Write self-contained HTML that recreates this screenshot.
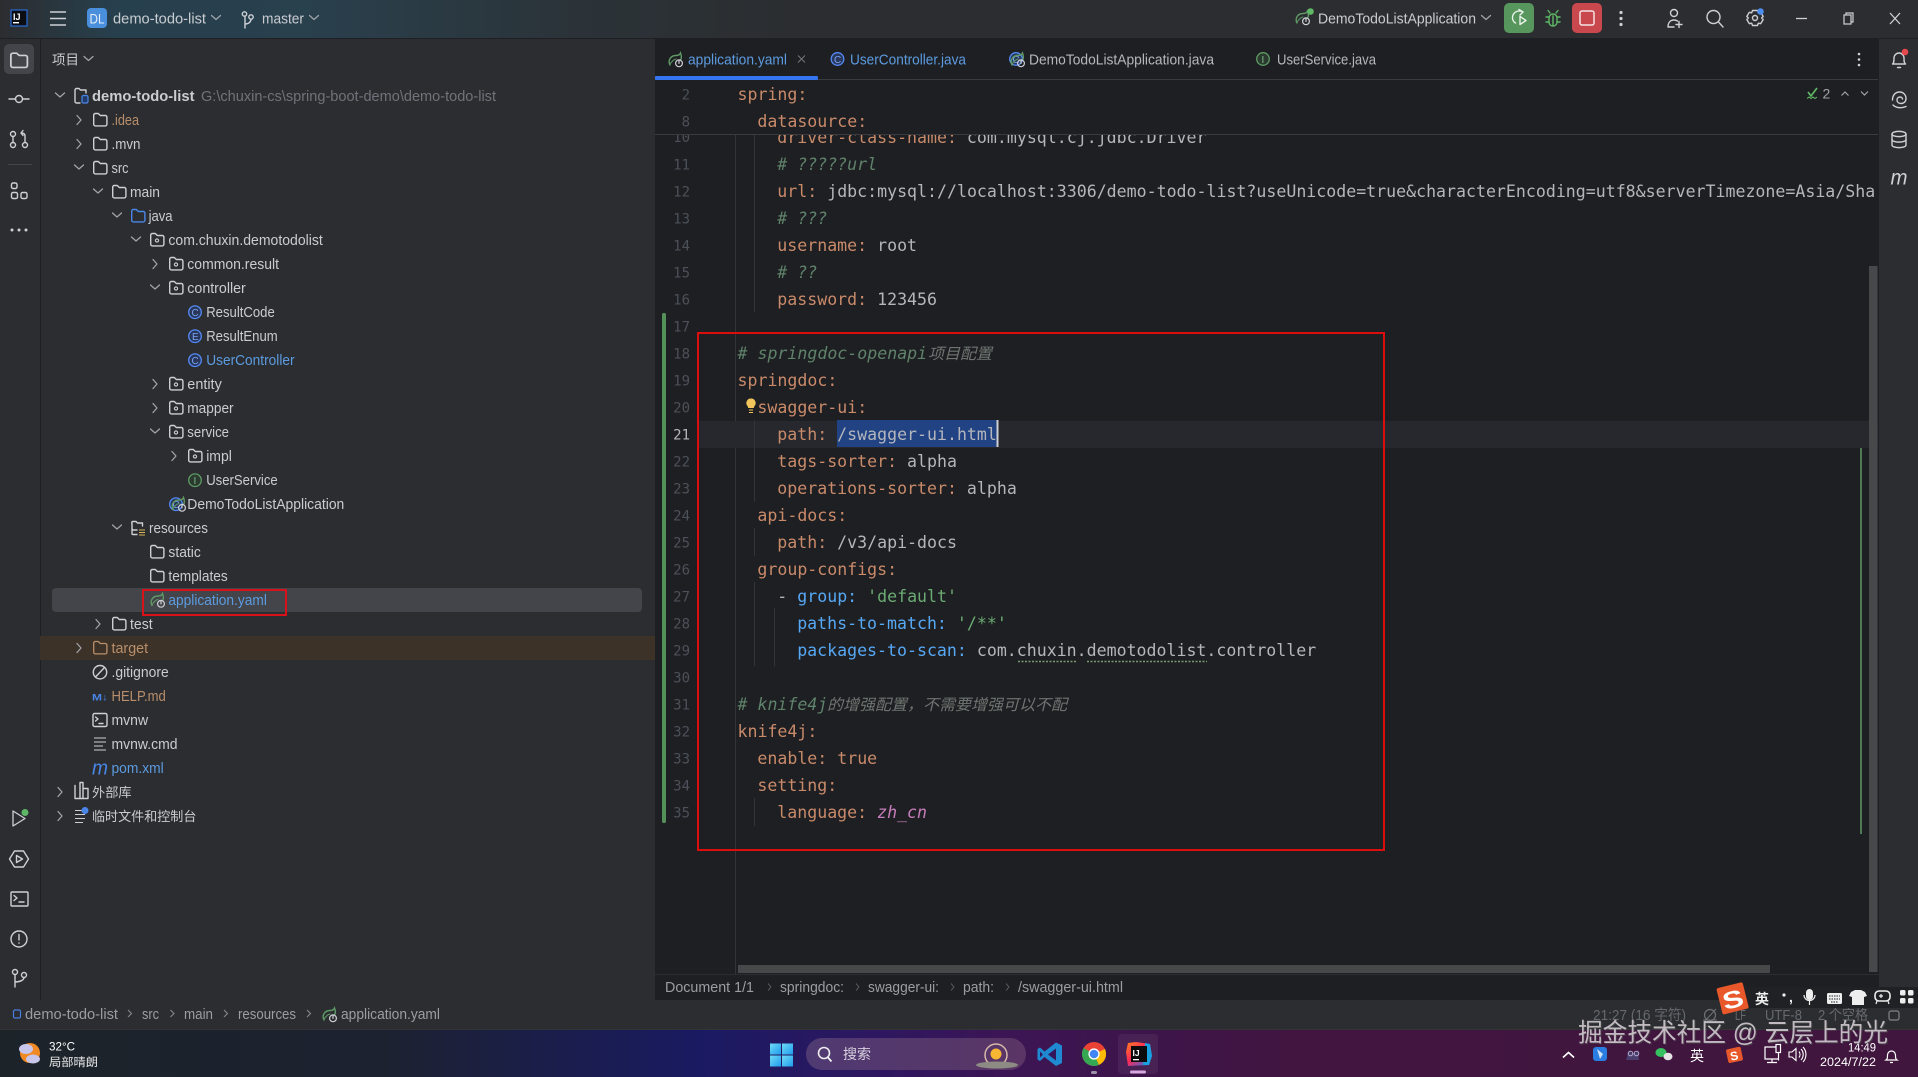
<!DOCTYPE html>
<html lang="zh"><head><meta charset="utf-8"><title>demo-todo-list</title>
<style>
html,body{margin:0;padding:0;background:#2b2d30;overflow:hidden;width:1918px;height:1077px}
svg{display:block;filter:blur(.35px)}
text{font-family:"Liberation Sans","Noto Sans CJK SC",sans-serif;font-size:14.5px;fill:#c9ccd1;white-space:pre}
.m text,text.m{font-family:"DejaVu Sans Mono","Liberation Mono","Noto Sans CJK SC",monospace;font-size:16.58px;fill:#b4b6bc}
.n text{font-family:"DejaVu Sans Mono","Liberation Mono",monospace;font-size:14px;fill:#4b5059;text-anchor:end}
.k{fill:#c98a6a!important}.b{fill:#56a8f5!important}.g{fill:#6aab73!important}.c{fill:#5f826b!important;font-style:italic}
.blu{fill:#5c9be0!important}.tan{fill:#b98f6b!important}.dim{fill:#6f737a!important}.st{fill:#9a9da3!important}
.ic{fill:none;stroke:#ced0d6;stroke-width:1.4;stroke-linecap:round;stroke-linejoin:round}
.chev{fill:none;stroke:#a0a3a9;stroke-width:1.3;stroke-linecap:round;stroke-linejoin:round}
</style></head><body>
<svg width="1918" height="1077" viewBox="0 0 1918 1077" xmlns="http://www.w3.org/2000/svg">
<defs>
<linearGradient id="top" x1="0" x2="1" y1="0" y2="0"><stop offset="0" stop-color="#2b2d30"/><stop offset=".06" stop-color="#27404d"/><stop offset=".16" stop-color="#29404d"/><stop offset=".3" stop-color="#2b3338"/><stop offset=".42" stop-color="#2b2d30"/></linearGradient>
<linearGradient id="tb" x1="0" x2="1" y1="0" y2="0"><stop offset="0" stop-color="#1c2329"/><stop offset=".2" stop-color="#1c2230"/><stop offset=".365" stop-color="#1a1a62"/><stop offset=".46" stop-color="#2e1760"/><stop offset=".52" stop-color="#3b1555"/><stop offset=".68" stop-color="#41153f"/><stop offset="1" stop-color="#40163e"/></linearGradient>
<linearGradient id="win" x1="0" x2="1" y1="0" y2="1"><stop offset="0" stop-color="#6fdcf5"/><stop offset="1" stop-color="#1f9bee"/></linearGradient>
<linearGradient id="pill" x1="0" x2="1" y1="0" y2="0"><stop offset="0" stop-color="#4f3a72"/><stop offset="1" stop-color="#5a3565"/></linearGradient>
<linearGradient id="ij" x1="0" x2="1" y1="0" y2="1"><stop offset="0" stop-color="#fc801d"/><stop offset=".45" stop-color="#fe2857"/><stop offset="1" stop-color="#087cfa"/></linearGradient>
<g id="folder" class="ic"><path d="M.7 2.6A1.6 1.6 0 0 1 2.3 1h3l2 2h5a1.6 1.6 0 0 1 1.6 1.6v7.2a1.6 1.6 0 0 1-1.6 1.6h-10A1.6 1.6 0 0 1 .7 11.8z"/></g>
<g id="pkg"><use href="#folder"/><circle cx="7" cy="8" r="1.6" fill="none" stroke="#ced0d6" stroke-width="1.1"/></g>
<g id="leaf" fill="none" stroke-linecap="round"><path d="M2 13C-.5 8 3 3.5 8 3.5 10.5 3.5 12 2.5 12.5 1c1.2 3 1 5 .3 6.5" stroke="#5f9a66" stroke-width="1.4"/><path d="M2 12.5C4 8.5 6 7.5 8 7" stroke="#5f9a66" stroke-width="1.1"/><circle cx="11" cy="11.3" r="3.4" stroke="#ced0d6" stroke-width="1.2"/><path d="M11 8.6v2.8" stroke="#ced0d6" stroke-width="1.2"/></g>
<g id="cls"><circle cx="7" cy="7" r="6.3" fill="#28375a" stroke="#548af7" stroke-width="1.3"/></g>
<g id="ifc"><circle cx="7" cy="7" r="6.3" fill="#2b3a2e" stroke="#5f9a66" stroke-width="1.3"/></g>
<g id="chr" class="chev"><path d="M0 -4.5L4 0L0 4.5"/></g>
<g id="chd" class="chev"><path d="M-4.5 -2L0 2L4.5 -2"/></g>
</defs>

<!-- base areas -->
<rect width="1918" height="1077" fill="#2b2d30"/>
<rect width="1918" height="38" fill="url(#top)"/>
<rect y="38" width="1918" height="1" fill="#1e1f22"/>
<rect x="40" y="39" width="1" height="961" fill="#1e1f22"/>
<rect x="655" y="39" width="1224" height="961" fill="#1e1f22"/>

<!-- title bar -->
<rect x="11" y="10" width="16" height="16" fill="#0b0d12" stroke="#2a6bd6" stroke-width="1.2"/>
<text x="13" y="20" style="font-size:9px;font-weight:bold;fill:#fff">IJ</text>
<rect x="13" y="22" width="6" height="1.4" fill="#fff"/>
<path d="M50 12h16M50 18.5h16M50 25h16" stroke="#ced0d6" stroke-width="1.6" fill="none"/>
<rect x="87" y="8" width="20" height="20" rx="4" fill="#4a8fdc"/>
<text x="89.5" y="23.5" style="font-size:13.5px;fill:#e6eef8" textLength="15" lengthAdjust="spacingAndGlyphs">DL</text>
<text x="113" y="23.5" textLength="93" lengthAdjust="spacingAndGlyphs">demo-todo-list</text>
<use href="#chd" x="216" y="17.5"/>
<g class="ic" stroke-width="1.2"><circle cx="244.5" cy="14" r="2.2"/><circle cx="251" cy="17" r="2.2"/><path d="M245 16.5V28M245 24c4 0 6-2.500 6-4.700"/></g>
<text x="262" y="23.5" textLength="42" lengthAdjust="spacingAndGlyphs">master</text>
<use href="#chd" x="314" y="17.5"/>

<use href="#leaf" x="1295" y="10"/>
<circle cx="1310.5" cy="11.5" r="3.3" fill="#5fb865"/>
<text x="1318" y="23.5" textLength="158" lengthAdjust="spacingAndGlyphs">DemoTodoListApplication</text>
<use href="#chd" x="1486" y="17.5"/>
<rect x="1504" y="3" width="30" height="30" rx="5" fill="#57965c"/>
<g fill="none" stroke="#e8f2e8" stroke-width="1.4" stroke-linejoin="round" stroke-linecap="round"><path d="M1523 12a7 7 0 0 0-10 3c-1.5 4 .5 7 2.5 8"/><path d="M1519 9.5l4 2.5-3 3"/><path d="M1520 16.5l6 4-6 4z"/></g>
<g fill="none" stroke="#5fb865" stroke-width="1.4" stroke-linecap="round"><rect x="1549" y="14" width="8" height="12" rx="4"/><path d="M1550 13l-2-2.500M1556 13l2-2.500M1546 17h3M1557 17h3M1546 22h3M1557 22h3M1553 16v9"/></g>
<rect x="1572" y="3" width="30" height="30" rx="5" fill="#c9484e"/>
<rect x="1580" y="11" width="14" height="14" rx="2" fill="none" stroke="#f4e4e4" stroke-width="1.5"/>
<g fill="#ced0d6"><circle cx="1621" cy="12.500" r="1.6"/><circle cx="1621" cy="18.500" r="1.6"/><circle cx="1621" cy="24.500" r="1.6"/></g>
<g class="ic"><circle cx="1674" cy="13" r="3.500"/><path d="M1668 27c0-4 2-7 6-7 1.500 0 2.500.4 3.500 1M1668 27h6M1679 21.500v6M1676 24.500h6"/></g>
<g class="ic" stroke-width="1.6"><circle cx="1713.500" cy="17" r="6.500"/><path d="M1718.500 22l4.500 5"/></g>
<g class="ic" stroke-width="1.300"><circle cx="1755" cy="18" r="2.500"/><path d="M1752.500 10.500h5l.8 2.300 2.400-.5 2.500 4.200-1.600 1.500 1.600 1.500-2.500 4.200-2.400-.5-.8 2.300h-5l-.8-2.300-2.400.5-2.500-4.200 1.600-1.500-1.600-1.500 2.500-4.200 2.400.5z"/></g>
<circle cx="1760.500" cy="11.500" r="3.300" fill="#4c8df0"/>
<path d="M1796 18.500h11" stroke="#ced0d6" stroke-width="1.3"/>
<g fill="none" stroke="#ced0d6" stroke-width="1.2"><rect x="1844" y="15" width="7" height="9"/><path d="M1846 15v-2h7v9h-2"/></g>
<path d="M1890 13l10 11M1900 13l-10 11" stroke="#ced0d6" stroke-width="1.3"/>

<!-- left toolbar -->
<rect x="4" y="44" width="30" height="30" rx="5" fill="#43454a"/>
<g class="ic" transform="translate(10,52) scale(1.25,1.15)" stroke-width="1.2"><path d="M.7 2.6A1.600 1.600 0 0 1 2.300 1h3l2 2h5a1.600 1.600 0 0 1 1.600 1.600v7.200a1.600 1.600 0 0 1-1.600 1.600h-10A1.600 1.600 0 0 1 .7 11.800z"/></g>
<g class="ic"><circle cx="19" cy="99" r="3.500"/><path d="M9 99h6.500M22.500 99H29"/></g>
<g class="ic" stroke-width="1.200"><circle cx="13" cy="134" r="2.500"/><circle cx="13" cy="145" r="2.500"/><circle cx="25" cy="145" r="2.500"/><path d="M13 136.500v6M25 142.500V136c0-2-1-3-4-3M21 133l2-2.500M21 133l2 2.500"/></g>
<rect x="8" y="164" width="24" height="1" fill="#43454a"/>
<g class="ic" stroke-width="1.200"><rect x="11.500" y="183" width="5.500" height="5.500" rx="1.500"/><rect x="11.500" y="192.500" width="6" height="6" rx="1.500"/><rect x="21" y="192.500" width="6" height="6" rx="1.500"/></g>
<g fill="#ced0d6"><circle cx="12" cy="230" r="1.500"/><circle cx="19" cy="230" r="1.500"/><circle cx="26" cy="230" r="1.500"/></g>
<path d="M13 811v15l12-7.500z" fill="none" stroke="#ced0d6" stroke-width="1.300" stroke-linejoin="round"/><circle cx="25" cy="812.500" r="3.500" fill="#5fb865"/>
<g class="ic" stroke-width="1.200"><path d="M14.500 851h9l5 8-5 8h-9l-5-8z"/><path d="M16.500 855.500v7l6-3.500z"/></g>
<g class="ic" stroke-width="1.200"><rect x="11" y="892" width="17" height="14" rx="1"/><path d="M14 895.500l3 2.500-3 2.500M19 902h5"/></g>
<g class="ic" stroke-width="1.300"><circle cx="19" cy="939" r="8"/><path d="M19 934.500v5.500M19 943v.2"/></g>
<g class="ic" stroke-width="1.200"><circle cx="15" cy="972" r="2.500"/><circle cx="24" cy="975" r="2.500"/><path d="M15 974.500V987M15 982c5 0 9-2 9-4.500"/></g>

<!-- project panel -->
<text x="52" y="64.500" style="font-size:13.500px">项目</text>
<use href="#chd" x="88.500" y="58.500"/>
<rect x="40" y="636" width="615" height="24" fill="#3d3227"/>
<rect x="52" y="588" width="590" height="24" rx="4" fill="#43454a"/>

<g>
<use href="#chd" x="60" y="95"/><use href="#chr" x="77" y="120"/><use href="#chr" x="77" y="144"/><use href="#chd" x="79" y="167"/><use href="#chd" x="98" y="191"/><use href="#chd" x="117" y="215"/><use href="#chd" x="136" y="239"/><use href="#chr" x="153" y="264"/><use href="#chd" x="155" y="287"/><use href="#chr" x="153" y="384"/><use href="#chr" x="153" y="408"/><use href="#chd" x="155" y="431"/><use href="#chr" x="172" y="456"/><use href="#chd" x="117" y="527"/><use href="#chr" x="96" y="624"/><use href="#chr" x="77" y="648"/><use href="#chr" x="58" y="792"/><use href="#chr" x="58" y="816"/>
</g>

<g transform="translate(0,-.5)">
<g class="ic" stroke-width="1.200"><path d="M75 90.500a1.500 1.500 0 0 1 1.500-1.500h2.500l1.500 1.500h5.500v3M80 103.500h-3.500a1.500 1.500 0 0 1-1.500-1.500V90.500"/></g>
<rect x="82" y="96" width="6" height="7.500" rx="1.500" fill="#223a6a" stroke="#4a86e8" stroke-width="1.200"/>
<use href="#folder" x="93" y="113"/><use href="#folder" x="93" y="137"/><use href="#folder" x="93" y="161"/><use href="#folder" x="112" y="185"/>
<g transform="translate(131,209)"><path fill="none" stroke="#4a86e8" stroke-width="1.400" d="M.7 2.600A1.600 1.600 0 0 1 2.300 1h3l2 2h5a1.600 1.600 0 0 1 1.600 1.600v7.200a1.600 1.600 0 0 1-1.600 1.600h-10A1.600 1.600 0 0 1 .7 11.800z"/></g>
<use href="#pkg" x="150" y="233"/><use href="#pkg" x="169" y="257"/><use href="#pkg" x="169" y="281"/>
<use href="#cls" x="188" y="305.700"/><text x="191.500" y="316.700" style="font-size:10px;fill:#7ba4f5">C</text>
<use href="#cls" x="188" y="329.700"/><text x="192" y="340.700" style="font-size:10px;fill:#7ba4f5">E</text>
<use href="#cls" x="188" y="353.700"/><text x="191.500" y="364.700" style="font-size:10px;fill:#7ba4f5">C</text>
<use href="#pkg" x="169" y="377"/><use href="#pkg" x="169" y="401"/><use href="#pkg" x="169" y="425"/><use href="#pkg" x="188" y="449"/>
<use href="#ifc" x="188" y="473.700"/><text x="193.500" y="484.700" style="font-size:10px;fill:#7fb886">I</text>
<use href="#cls" x="169" y="497.700"/><text x="172.500" y="508.700" style="font-size:10px;fill:#7ba4f5">C</text>
<use href="#leaf" x="171" y="497"/>
<g class="ic" stroke-width="1.200"><path d="M137 530.500h-3.500a1.500 1.500 0 0 1-1.500-1.500V524a1.500 1.500 0 0 1 .5-2h3.500l1.500 1.500h5v3M137 535h-4a1 1 0 0 1-1-1v-5"/></g>
<path d="M139 530.500h6M139 533h6M139 535.500h6" stroke="#d8b45a" stroke-width="1.100"/>
<use href="#folder" x="150" y="545"/><use href="#folder" x="150" y="569"/>
<use href="#leaf" x="150" y="593"/>
<use href="#folder" x="112" y="617"/>
<g transform="translate(93,641)"><path d="M.7 2.600A1.600 1.600 0 0 1 2.300 1h3l2 2h5a1.600 1.600 0 0 1 1.600 1.600v7.200a1.600 1.600 0 0 1-1.600 1.600h-10A1.600 1.600 0 0 1 .7 11.800z" fill="none" stroke="#b98f6b" stroke-width="1.300"/></g>
<g class="ic" stroke-width="1.200"><circle cx="100" cy="672.700" r="6.700"/><path d="M95.500 677.500l9-9.500"/></g>
<text x="92" y="701" style="font-size:9.500px;font-weight:bold;fill:#4a86e8" textLength="16" lengthAdjust="spacingAndGlyphs">M↓</text>
<g class="ic" stroke-width="1.100"><rect x="93" y="714" width="14" height="13" rx="1.500"/><path d="M95.500 717.500l2.500 2-2.500 2M99 724h4"/></g>
<path d="M94 738.500h12M94 742.500h12M94 746.500h9M94 750.500h12" stroke="#ced0d6" stroke-width="1.100" fill="none"/>
<text x="92" y="775" style="font-size:20px;font-style:italic;fill:#4a86e8" textLength="16" lengthAdjust="spacingAndGlyphs">m</text>
<g class="ic" stroke-width="1.100"><path d="M75 786v13h13v-10h-5v10M80 799v-16h3v6"/></g>
<g fill="none" stroke="#ced0d6" stroke-width="1.100"><path d="M75 811h7M75 815h10M75 819h10M75 823h8"/></g>
<circle cx="85" cy="811" r="3.500" fill="#4a86e8"/>

<text x="92" y="101.500" style="font-weight:bold" textLength="102.500" lengthAdjust="spacingAndGlyphs">demo-todo-list</text>
<text x="201" y="101.500" class="dim" textLength="295" lengthAdjust="spacingAndGlyphs">G:\chuxin-cs\spring-boot-demo\demo-todo-list</text>
<text x="111.500" y="125.500" class="tan" textLength="27.500" lengthAdjust="spacingAndGlyphs">.idea</text>
<text x="111.500" y="149.500" textLength="29" lengthAdjust="spacingAndGlyphs">.mvn</text>
<text x="111.500" y="173.500" textLength="17" lengthAdjust="spacingAndGlyphs">src</text>
<text x="130" y="197.500" textLength="30" lengthAdjust="spacingAndGlyphs">main</text>
<text x="148.600" y="221.500" textLength="24" lengthAdjust="spacingAndGlyphs">java</text>
<text x="168.400" y="245.500" textLength="154.400" lengthAdjust="spacingAndGlyphs">com.chuxin.demotodolist</text>
<text x="187.300" y="269.500" textLength="91.700" lengthAdjust="spacingAndGlyphs">common.result</text>
<text x="187.300" y="293.500" textLength="58.500" lengthAdjust="spacingAndGlyphs">controller</text>
<text x="206.200" y="317.500" textLength="68.600" lengthAdjust="spacingAndGlyphs">ResultCode</text>
<text x="206.200" y="341.500" textLength="71.500" lengthAdjust="spacingAndGlyphs">ResultEnum</text>
<text x="206.200" y="365.500" class="blu" textLength="88.400" lengthAdjust="spacingAndGlyphs">UserController</text>
<text x="187.300" y="389.500" textLength="34.500" lengthAdjust="spacingAndGlyphs">entity</text>
<text x="187.300" y="413.500" textLength="46.300" lengthAdjust="spacingAndGlyphs">mapper</text>
<text x="187.300" y="437.500" textLength="41.700" lengthAdjust="spacingAndGlyphs">service</text>
<text x="206.200" y="461.500" textLength="25.700" lengthAdjust="spacingAndGlyphs">impl</text>
<text x="206.200" y="485.500" textLength="71.500" lengthAdjust="spacingAndGlyphs">UserService</text>
<text x="187.300" y="509.500" textLength="157" lengthAdjust="spacingAndGlyphs">DemoTodoListApplication</text>
<text x="149" y="533.500" textLength="59" lengthAdjust="spacingAndGlyphs">resources</text>
<text x="168.400" y="557.500" textLength="32.400" lengthAdjust="spacingAndGlyphs">static</text>
<text x="168.400" y="581.500" textLength="59.300" lengthAdjust="spacingAndGlyphs">templates</text>
<text x="168.400" y="605.500" class="blu" textLength="98.500" lengthAdjust="spacingAndGlyphs">application.yaml</text>
<text x="130" y="629.500" textLength="22.700" lengthAdjust="spacingAndGlyphs">test</text>
<text x="111.500" y="653.500" class="tan" textLength="36.600" lengthAdjust="spacingAndGlyphs">target</text>
<text x="111.500" y="677.500" textLength="57.200" lengthAdjust="spacingAndGlyphs">.gitignore</text>
<text x="111.500" y="701.500" class="tan" textLength="54.300" lengthAdjust="spacingAndGlyphs">HELP.md</text>
<text x="111.500" y="725.500" textLength="36.600" lengthAdjust="spacingAndGlyphs">mvnw</text>
<text x="111.500" y="749.500" textLength="66" lengthAdjust="spacingAndGlyphs">mvnw.cmd</text>
<text x="111.500" y="773.500" class="blu" textLength="52.200" lengthAdjust="spacingAndGlyphs">pom.xml</text>
<text x="92" y="797.500" style="font-size:13px" textLength="39.600" lengthAdjust="spacingAndGlyphs">外部库</text>
<text x="92" y="821.500" style="font-size:13px" textLength="104.400" lengthAdjust="spacingAndGlyphs">临时文件和控制台</text>
</g>
<rect x="143" y="590" width="143" height="25" fill="none" stroke="#d9111b" stroke-width="2"/>

<!-- tabs -->
<use href="#leaf" x="668" y="52"/>
<text x="688" y="64.500" class="blu" textLength="99" lengthAdjust="spacingAndGlyphs">application.yaml</text>
<path d="M798 55.500l7 7M805 55.500l-7 7" stroke="#6f737a" stroke-width="1.100"/>
<use href="#cls" x="830.500" y="52"/><text x="834" y="63" style="font-size:10px;fill:#7ba4f5">C</text>
<text x="850" y="64.500" class="blu" textLength="116" lengthAdjust="spacingAndGlyphs">UserController.java</text>
<use href="#cls" x="1009" y="52"/><text x="1012.500" y="63" style="font-size:10px;fill:#7ba4f5">C</text>
<use href="#leaf" x="1010" y="52"/>
<text x="1029" y="64.500" textLength="185" lengthAdjust="spacingAndGlyphs" style="fill:#b4b7bc">DemoTodoListApplication.java</text>
<use href="#ifc" x="1256" y="52"/><text x="1261.500" y="63" style="font-size:10px;fill:#7fb886">I</text>
<text x="1277" y="64.500" textLength="99" lengthAdjust="spacingAndGlyphs" style="fill:#b4b7bc">UserService.java</text>
<g fill="#ced0d6"><circle cx="1859" cy="54" r="1.300"/><circle cx="1859" cy="59.500" r="1.300"/><circle cx="1859" cy="65" r="1.300"/></g>
<rect x="655" y="79" width="1224" height="1" fill="#393b40"/>
<rect x="655" y="76" width="163" height="4" rx="1" fill="#3574f0"/>

<!-- editor -->
<rect x="735" y="80" width="1" height="895" fill="#313438"/>
<rect x="698" y="421" width="1181" height="27" fill="#26282e"/>
<rect x="837" y="420" width="160" height="27" fill="#214283"/>
<rect x="662" y="313" width="4" height="510" rx="1.500" fill="#549159"/>
<rect x="1860" y="448" width="2" height="386" fill="#4e7a55"/>
<rect x="1869" y="266" width="8.500" height="706" fill="#47484a"/>
<rect x="738" y="965" width="1032" height="8" fill="#47484a"/>
<g fill="#313438"><rect x="754" y="134" width="1" height="178"/><rect x="754" y="420" width="1" height="82"/><rect x="754" y="528" width="1" height="28"/><rect x="754" y="582" width="1" height="84"/><rect x="774" y="608" width="1" height="58"/><rect x="754" y="798" width="1" height="28"/></g>

<g class="m">
<text x="777.300" y="143" xml:space="preserve"><tspan class="k">driver-class-name:</tspan> com.mysql.cj.jdbc.Driver</text>
<text x="777.300" y="170" class="c"># ?????url</text>
<text x="777.300" y="197" xml:space="preserve"><tspan class="k">url:</tspan> jdbc:mysql://localhost:3306/demo-todo-list?useUnicode=true&amp;characterEncoding=utf8&amp;serverTimezone=Asia/Sha</text>
<text x="777.300" y="224" class="c"># ???</text>
<text x="777.300" y="251" xml:space="preserve"><tspan class="k">username:</tspan> root</text>
<text x="777.300" y="278" class="c"># ??</text>
<text x="777.300" y="305" xml:space="preserve"><tspan class="k">password:</tspan> 123456</text>
<text x="737.500" y="359" class="c"># springdoc-openapi</text>
<text x="928" y="359" class="c" style="font-size:15.500px;fill:#6e7570!important" textLength="64" lengthAdjust="spacingAndGlyphs">项目配置</text>
<text x="737.500" y="386" class="k">springdoc:</text>
<text x="757.400" y="413" class="k">swagger-ui:</text>
<text x="777.300" y="440" xml:space="preserve"><tspan class="k">path:</tspan> /swagger-ui.html</text>
<text x="777.300" y="467" xml:space="preserve"><tspan class="k">tags-sorter:</tspan> alpha</text>
<text x="777.300" y="494" xml:space="preserve"><tspan class="k">operations-sorter:</tspan> alpha</text>
<text x="757.400" y="521" class="k">api-docs:</text>
<text x="777.300" y="548" xml:space="preserve"><tspan class="k">path:</tspan> /v3/api-docs</text>
<text x="757.400" y="575" class="k">group-configs:</text>
<text x="777.300" y="602" xml:space="preserve">- <tspan class="b">group:</tspan> <tspan class="g">'default'</tspan></text>
<text x="797.200" y="629" xml:space="preserve"><tspan class="b">paths-to-match:</tspan> <tspan class="g">'/**'</tspan></text>
<text x="797.200" y="656" xml:space="preserve"><tspan class="b">packages-to-scan:</tspan> com.chuxin.demotodolist.controller</text>
<text x="737.500" y="710" class="c"># knife4j</text>
<text x="827" y="710" class="c" style="font-size:15.500px;fill:#6e7570!important" textLength="240" lengthAdjust="spacingAndGlyphs">的增强配置，不需要增强可以不配</text>
<text x="737.500" y="737" class="k">knife4j:</text>
<text x="757.400" y="764" xml:space="preserve"><tspan class="k">enable: true</tspan></text>
<text x="757.400" y="791" class="k">setting:</text>
<text x="777.300" y="818" xml:space="preserve"><tspan class="k">language:</tspan> <tspan style="fill:#c77dbb;font-style:italic">zh_cn</tspan></text>
</g>
<path d="M1018 661.500h59M1087 661.500h120" stroke="#7a9a70" stroke-width="1.500" stroke-dasharray="2 1.500"/>
<rect x="996.500" y="420" width="2" height="27" fill="#ced0d6"/>
<path d="M751 399.500a4.500 4.500 0 0 1 3.500 7.500l-.8 2h-5.400l-.8-2a4.500 4.500 0 0 1 3.500-7.500z" fill="#f2c55c" transform="translate(0,-1)"/>
<path d="M749 410h4M749 412.500h4" stroke="#f2c55c" stroke-width="1"/>

<g class="n">
<text x="690" y="142">10</text><text x="690" y="169.500">11</text><text x="690" y="196.500">12</text><text x="690" y="223.500">13</text><text x="690" y="250.500">14</text><text x="690" y="277.500">15</text><text x="690" y="304.500">16</text><text x="690" y="331.500">17</text><text x="690" y="358.500">18</text><text x="690" y="385.500">19</text><text x="690" y="412.500">20</text><text x="690" y="439.500" style="fill:#b4b7bc">21</text><text x="690" y="466.500">22</text><text x="690" y="493.500">23</text><text x="690" y="520.500">24</text><text x="690" y="547.500">25</text><text x="690" y="574.500">26</text><text x="690" y="601.500">27</text><text x="690" y="628.500">28</text><text x="690" y="655.500">29</text><text x="690" y="682.500">30</text><text x="690" y="709.500">31</text><text x="690" y="736.500">32</text><text x="690" y="763.500">33</text><text x="690" y="790.500">34</text><text x="690" y="817.500">35</text>
</g>

<!-- sticky lines -->
<rect x="655" y="80" width="1224" height="54" fill="#1e1f22"/>
<rect x="655" y="134" width="1224" height="1" fill="#393b40"/>
<g class="n"><text x="690" y="99.500">2</text><text x="690" y="126.500">8</text></g>
<g class="m"><text x="737.500" y="100" class="k">spring:</text><text x="757.400" y="127" class="k">datasource:</text></g>
<path d="M1808 92l3 4 6-8" fill="none" stroke="#5fb865" stroke-width="1.700"/>
<path d="M1807 98.500l2-1.500 2 1.500 2-1.500 2 1.500 2-1.500" fill="none" stroke="#5fb865" stroke-width="1"/>
<text x="1822.500" y="98.500" style="font-size:14px;fill:#a0a3a9">2</text>
<path d="M1841.500 95.500l3.500-3.500 3.500 3.500M1861 91.500l3.500 3.500 3.500-3.500" fill="none" stroke="#a0a3a9" stroke-width="1.200"/>

<!-- right toolbar -->
<rect x="1878" y="39" width="1" height="961" fill="#1e1f22"/>
<g class="ic" stroke-width="1.300"><path d="M1892.500 64c1.500-1 1.500-3 1.500-6a5 5 0 0 1 10 0c0 3 0 5 1.500 6zM1897.500 67.500h3"/></g>
<circle cx="1905" cy="52" r="3.300" fill="#e5484d"/>
<g class="ic" stroke-width="1.300"><path d="M1892.500 100c0-5 3-8 7-8s6.500 3 6.500 6.500-2.500 5-5 5-4-1.500-4-3.500 1.500-3 3-3 2.500 1 2.500 2"/><path d="M1893 105c3 3 8 3.500 13 1.500"/></g>
<g class="ic" stroke-width="1.300"><path d="M1892 134c0-3.500 14-3.500 14 0v11c0 3.500-14 3.500-14 0z"/><path d="M1892 134c0 3.500 14 3.500 14 0M1892 139.500c0 3.500 14 3.500 14 0"/></g>
<text x="1890.500" y="184.500" style="font-size:21px;font-style:italic;fill:#ced0d6" textLength="17" lengthAdjust="spacingAndGlyphs">m</text>

<!-- red box -->
<rect x="698" y="333" width="686" height="517" fill="none" stroke="#dd0d0d" stroke-width="2"/>

<!-- editor breadcrumb -->
<rect x="655" y="974" width="1224" height="1" fill="#2b2d30"/>
<rect x="655" y="975" width="1224" height="25" fill="#1e1f22"/>
<text x="665" y="992" class="st" textLength="89" lengthAdjust="spacingAndGlyphs">Document 1/1</text>
<g fill="none" stroke="#55585e" stroke-width="1"><path d="M768 983.500l3 3.500-3 3.500M856 983.500l3 3.500-3 3.500M951 983.500l3 3.500-3 3.500M1006 983.500l3 3.500-3 3.500"/></g>
<text x="780" y="992" class="st" textLength="64" lengthAdjust="spacingAndGlyphs">springdoc:</text>
<text x="868" y="992" class="st" textLength="71" lengthAdjust="spacingAndGlyphs">swagger-ui:</text>
<text x="963" y="992" class="st" textLength="31" lengthAdjust="spacingAndGlyphs">path:</text>
<text x="1018" y="992" class="st" textLength="105" lengthAdjust="spacingAndGlyphs">/swagger-ui.html</text>

<!-- status bar -->
<rect y="1000" width="1918" height="30" fill="#2b2d30"/>
<rect y="1029.500" width="1918" height="1" fill="#3a3c40"/>
<rect x="13.500" y="1010" width="7" height="8" rx="1.500" fill="none" stroke="#4a7de0" stroke-width="1.200"/>
<text x="25" y="1019" class="st" textLength="93" lengthAdjust="spacingAndGlyphs">demo-todo-list</text>
<g fill="none" stroke="#85888e" stroke-width="1.100"><path d="M128 1010l3.500 3.500-3.500 3.500M170.500 1010l3.500 3.500-3.500 3.500M224 1010l3.500 3.500-3.500 3.500M307 1010l3.500 3.500-3.500 3.500"/></g>
<text x="142" y="1019" class="st" textLength="17" lengthAdjust="spacingAndGlyphs">src</text>
<text x="184" y="1019" class="st" textLength="29" lengthAdjust="spacingAndGlyphs">main</text>
<text x="238" y="1019" class="st" textLength="58" lengthAdjust="spacingAndGlyphs">resources</text>
<use href="#leaf" x="322" y="1007"/>
<text x="341" y="1019" class="st" textLength="99" lengthAdjust="spacingAndGlyphs">application.yaml</text>
<g style="opacity:.85">
<text x="1593" y="1020" class="dim" textLength="93" lengthAdjust="spacingAndGlyphs">21:27 (16 字符)</text>
<circle cx="1710" cy="1015" r="5.500" fill="none" stroke="#7a7d83" stroke-width="1.200"/><path d="M1704 1022l12-13M1703 1020h14" stroke="#7a7d83" stroke-width="1"/>
<text x="1735" y="1020" class="dim" textLength="11" lengthAdjust="spacingAndGlyphs">LF</text>
<text x="1765" y="1020" class="dim" textLength="37" lengthAdjust="spacingAndGlyphs">UTF-8</text>
<text x="1818" y="1020" class="dim" textLength="50" lengthAdjust="spacingAndGlyphs">2 个空格</text>
<rect x="1889" y="1011" width="10" height="9" rx="2" fill="none" stroke="#8f9298" stroke-width="1.200"/>
</g>

<!-- taskbar -->
<rect y="1030" width="1918" height="47" fill="url(#tb)"/>
<!-- weather -->
<circle cx="30" cy="1053" r="10" fill="#f08a24"/>
<ellipse cx="26" cy="1049" rx="7" ry="5" fill="#c9c6ec"/>
<ellipse cx="33" cy="1059" rx="7" ry="4.500" fill="#c9c6ec"/>
<text x="49" y="1050.500" style="font-size:11.500px;fill:#fff" textLength="26" lengthAdjust="spacingAndGlyphs">32°C</text>
<text x="49" y="1066" style="font-size:11.500px;fill:#e8e8e8" textLength="49" lengthAdjust="spacingAndGlyphs">局部晴朗</text>
<!-- start -->
<g fill="url(#win)"><rect x="770" y="1043.500" width="11" height="11"/><rect x="782" y="1043.500" width="11" height="11"/><rect x="770" y="1055.500" width="11" height="11"/><rect x="782" y="1055.500" width="11" height="11"/></g>
<rect x="806" y="1038" width="220" height="32" rx="16" fill="url(#pill)"/>
<circle cx="824" cy="1053" r="5.500" fill="none" stroke="#eee" stroke-width="1.600"/><path d="M828 1057.500l3.500 4" stroke="#eee" stroke-width="1.800"/>
<text x="843" y="1059" style="font-size:14px;fill:#d8d0df" textLength="28" lengthAdjust="spacingAndGlyphs">搜索</text>
<circle cx="996" cy="1055" r="11" fill="none" stroke="#d6b9a8" stroke-width="1.500"/>
<circle cx="996" cy="1054" r="5.500" fill="#f7b733"/>
<ellipse cx="997" cy="1065" rx="21" ry="3.500" fill="#8d8b84"/>
<!-- vscode -->
<path d="M1056 1042.500L1062 1045.500V1063L1056 1066L1044.500 1057L1040 1061L1037.500 1059.500V1049L1040 1047.500L1044.500 1051.500Z" fill="#1f8ad2"/>
<path d="M1056 1048.500L1048 1054.500L1056 1060.500Z" fill="#33165a"/>
<path d="M1040 1051.500V1057.500L1043 1054.500Z" fill="#33165a"/>
<!-- chrome -->
<circle cx="1094" cy="1054" r="12" fill="#ea4335"/>
<path d="M1094 1054L1083.600 1060a12 12 0 0 0 15.400 4.900z" fill="#34a853"/>
<path d="M1094 1054L1083.600 1048a12 12 0 0 0 0 12z" fill="#34a853"/>
<path d="M1094 1054L1105 1049a12 12 0 0 1-6 15.900z" fill="#fbbc05"/>
<circle cx="1094" cy="1054" r="5.600" fill="#fff"/><circle cx="1094" cy="1054" r="4.300" fill="#4285f4"/>
<rect x="1091" y="1071" width="6" height="3" rx="1.500" fill="#9d92a8"/>
<!-- intellij -->
<rect x="1118" y="1034" width="40" height="40" rx="4" fill="#fff" opacity=".06"/>
<path d="M1128 1043l8-1 14 2 2 12-3 9-21 1-2-14z" fill="url(#ij)"/>
<path d="M1145 1043l5 1 2 12-3 9-6 0z" fill="#18a0e0"/>
<rect x="1131" y="1046" width="16" height="16" fill="#0c0c0e"/>
<text x="1132.500" y="1056" style="font-size:8.500px;font-weight:bold;fill:#fff">IJ</text>
<rect x="1133" y="1059" width="6" height="1.300" fill="#fff"/>
<rect x="1130" y="1070.500" width="16" height="3" rx="1.500" fill="#d8a6e0"/>
<!-- tray -->
<path d="M1563 1057.500l5.500-5 5.500 5" fill="none" stroke="#fff" stroke-width="1.600"/>
<rect x="1593" y="1047" width="14" height="14" rx="3" fill="#2a7de1"/><path d="M1597 1049l6 5-3 5z" fill="#cfe3fa"/>
<path d="M1626 1060l3-10 2 3h5l2-3 1 10z" fill="#4b3f6e"/><circle cx="1630.500" cy="1053.500" r="2.300" fill="none" stroke="#b0a8d0"/><circle cx="1636.500" cy="1053.500" r="2.300" fill="none" stroke="#b0a8d0"/>
<ellipse cx="1661" cy="1052.500" rx="5.500" ry="4.500" fill="#35c25f"/><ellipse cx="1668" cy="1056.500" rx="4.500" ry="3.800" fill="#e6e6e6"/>
<text x="1690" y="1061" style="font-size:14px;fill:#fff" textLength="14" lengthAdjust="spacingAndGlyphs">英</text>
<g transform="rotate(-12 1734 1055)"><rect x="1727" y="1048" width="15" height="14" rx="2" fill="#e8582a"/><text x="1730" y="1060" style="font-size:12px;font-weight:bold;fill:#fff">S</text></g>
<g fill="none" stroke="#fff" stroke-width="1.200"><path d="M1776 1047h-11v12h14M1772 1059v3M1767 1062.500h10"/><rect x="1776" y="1044.500" width="4.500" height="8"/><path d="M1778.500 1052.500v8"/></g>
<g fill="none" stroke="#fff" stroke-width="1.100"><path d="M1789 1052h3l4-3.500v12l-4-3.500h-3zM1799 1051.500a5 5 0 0 1 0 6M1801 1049a8 8 0 0 1 0 11M1803 1047a11 11 0 0 1 0 15"/></g>
<text x="1848" y="1051.500" style="font-size:11.500px;fill:#fff" textLength="28" lengthAdjust="spacingAndGlyphs">14:49</text>
<text x="1820" y="1066" style="font-size:11.500px;fill:#fff" textLength="56" lengthAdjust="spacingAndGlyphs">2024/7/22</text>
<path d="M1886 1060c1.500-1 1.500-2.500 1.500-5a4 4 0 0 1 8 0c0 2.500 0 4 1.500 5zM1890 1062.500h3" fill="none" stroke="#fff" stroke-width="1.200"/>

<!-- watermark -->
<text x="1579" y="1042.500" style="font-size:25.500px;fill:#555;opacity:.55" textLength="310" lengthAdjust="spacingAndGlyphs">掘金技术社区 @ 云层上的光</text>
<text x="1578" y="1041.500" style="font-size:25.500px;fill:#d0cad0;opacity:.9" textLength="310" lengthAdjust="spacingAndGlyphs">掘金技术社区 @ 云层上的光</text>

<!-- IME bar -->
<rect x="1742" y="987" width="176" height="21" fill="#202124"/>
<g transform="rotate(-14 1732 998)"><rect x="1719" y="985" width="27" height="27" rx="2" fill="#e8582a"/><text x="1722" y="1008" style="font-size:24px;font-weight:bold;fill:#fff" textLength="21" lengthAdjust="spacingAndGlyphs">S</text></g>
<text x="1755" y="1004" style="font-size:14px;font-weight:bold;fill:#eee">英</text>
<circle cx="1784" cy="995" r="1.600" fill="#eee"/><text x="1789" y="1002" style="font-size:14px;font-weight:bold;fill:#eee">,</text>
<rect x="1806" y="989" width="7" height="11" rx="3.500" fill="#eee"/><path d="M1804 995a5.500 5.500 0 0 0 11 0M1809.500 1001v4" fill="none" stroke="#eee" stroke-width="1.200"/>
<rect x="1827" y="993" width="15" height="11" rx="1.500" fill="#eee"/><path d="M1829 996h11M1829 999h11M1831 1002h7" stroke="#202124" stroke-width="1" stroke-dasharray="1.500 1"/>
<path d="M1851 992l4-2h6l4 2 2 4-3 1v8h-12v-8l-3-1z" fill="#eee"/>
<rect x="1875" y="991" width="15" height="10" rx="4" fill="none" stroke="#eee" stroke-width="1.600"/><path d="M1877 1001l-1 3M1888 1001l1 3M1879 996h4M1881 994v4" stroke="#eee" stroke-width="1.200"/>
<rect x="1900" y="990" width="5.500" height="5.500" rx="1.500" fill="#eee"/><rect x="1908" y="990" width="5.500" height="5.500" rx="1.500" fill="#eee"/><rect x="1900" y="998" width="5.500" height="5.500" rx="1.500" fill="#eee"/><rect x="1908" y="998" width="5.500" height="5.500" rx="1.500" fill="#eee"/>
</svg>
</body></html>
